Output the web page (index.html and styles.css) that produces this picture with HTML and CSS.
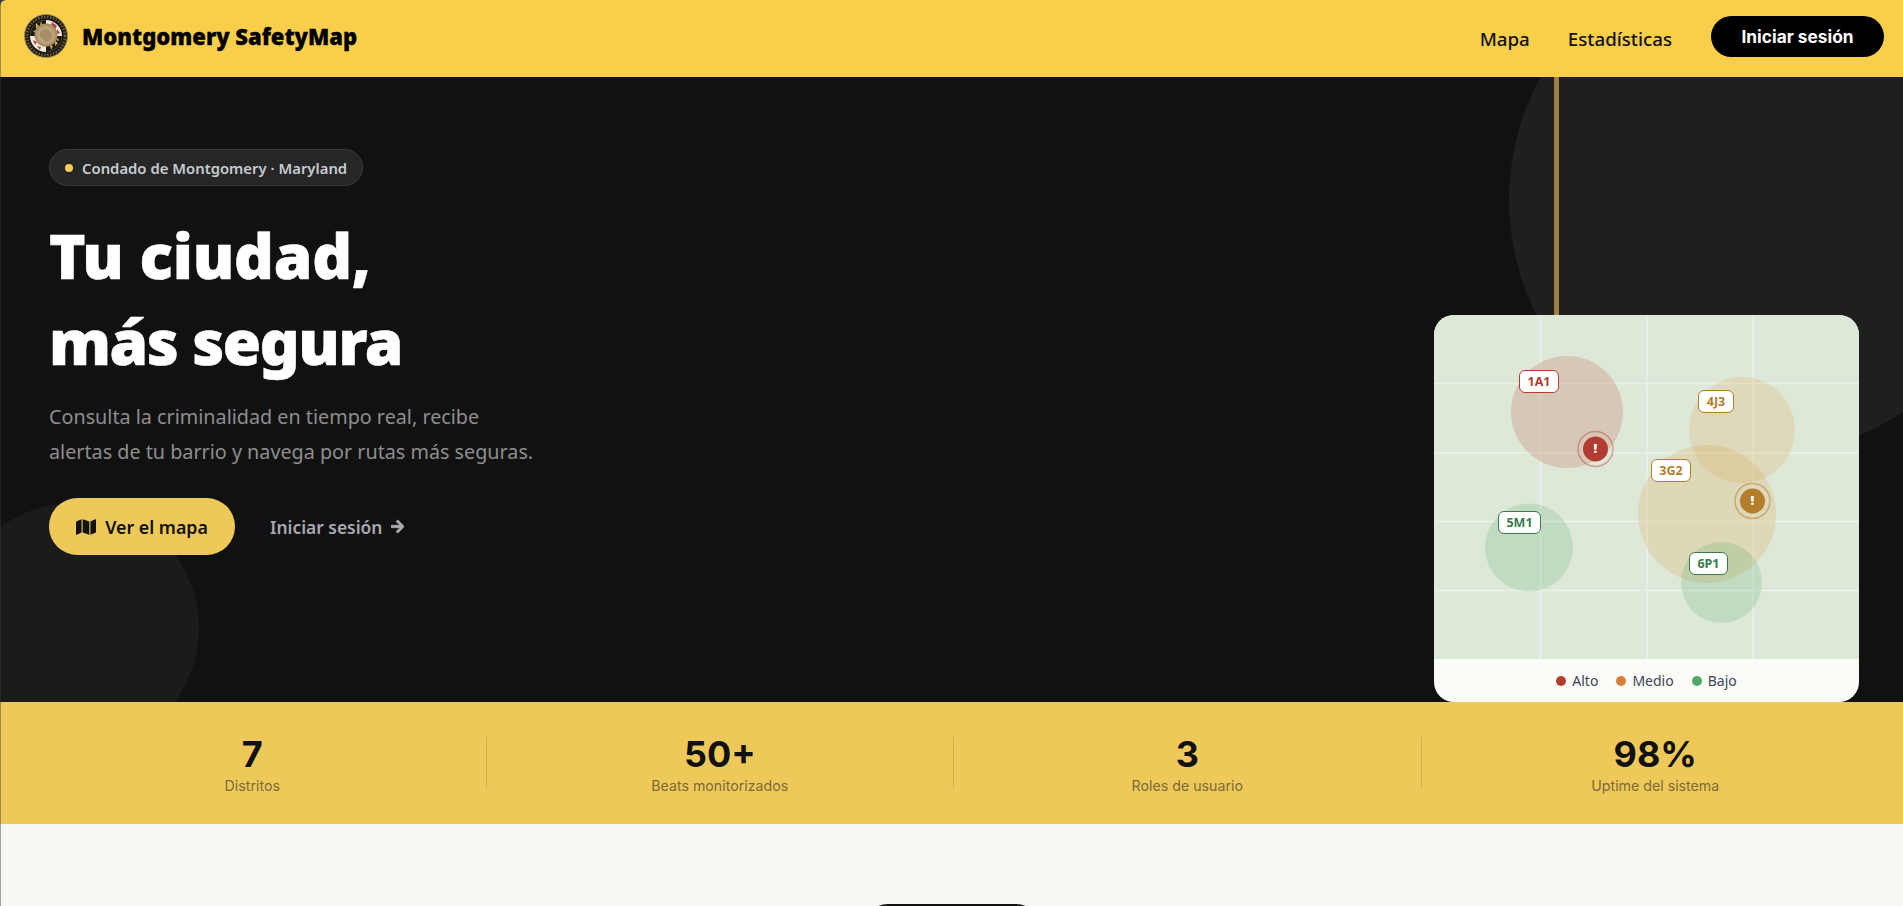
FILE: index.html
```html
<!DOCTYPE html>
<html lang="es">
<head>
    <meta charset="UTF-8">
    <title>Montgomery SafetyMap</title>
    <link rel="stylesheet" href="styles.css">
</head>
<body>
    <div class="page">
        <header class="topbar">
            <a href="#" class="brand">
                <svg class="brand_logo" viewBox="0 0 44 44" aria-hidden="true">
                    <defs>
                        <radialGradient id="seal_center">
                            <stop offset="0" stop-color="#cdb68a"/>
                            <stop offset="0.7" stop-color="#b9a077"/>
                            <stop offset="1" stop-color="#9a8662"/>
                        </radialGradient>
                    </defs>
                    <circle cx="22" cy="22" r="21.5" fill="#1a1710" stroke="#a08c58" stroke-width="1"/>
                    <circle cx="22" cy="22" r="19" fill="none" stroke="#6e6244" stroke-width="2.6" stroke-dasharray="1.5 1.5"/>
                    <circle cx="22" cy="22" r="16" fill="#efe9de"/>
                    <path d="M22 6a16 16 0 0 0-16 16h16z" fill="#1d1a12"/>
                    <path d="M22 38a16 16 0 0 0 16-16H22z" fill="#1d1a12"/>
                    <path d="M12 9l3 3-3 3zM9 17l4-1v4zM17 7l2 6-3-1z" fill="#d9b544"/>
                    <path d="M31 27l3 2-3 3zM26 31l3 1-2 4zM34 24l1 3-3-1z" fill="#d9b544"/>
                    <path d="M28 8l5 4-2 3-4-3zM33 15l3 4-3 1z" fill="#b8404a"/>
                    <path d="M9 26l4 2-2 3zM13 32l4 1-1 3z" fill="#b8404a"/>
                    <circle cx="22" cy="21" r="11.5" fill="url(#seal_center)"/>
                    <path d="M16 18l4-3 5 1 3 4-1 5-4 3-4-2-3-4z" fill="#a58e68"/>
                </svg>
                <span class="brand_name">Montgomery SafetyMap</span>
            </a>
            <nav class="topbar_nav">
                <a href="#" class="topbar_link">Mapa</a>
                <a href="#" class="topbar_link">Estadísticas</a>
                <a href="#" class="login_btn">Iniciar sesión</a>
            </nav>
        </header>

        <section class="hero">
            <div class="hero_circle_big"></div>
            <div class="hero_circle_small"></div>
            <div class="hero_line"></div>

            <div class="hero_text">
                <div class="chip"><span class="chip_dot"></span>Condado de Montgomery · Maryland</div>
                <h1 class="hero_title"><span class="title_first">Tu ciudad,</span><br>más segura</h1>
                <p class="hero_desc">Consulta la criminalidad en tiempo real, recibe<br>alertas de tu barrio y navega por rutas más seguras.</p>
                <div class="hero_actions">
                    <a href="#" class="map_btn">
                        <svg class="map_icon" viewBox="0 0 576 512" aria-hidden="true"><path d="M0 117.66v346.32c0 11.32 11.43 19.06 21.94 14.86L160 416V32L20.12 87.95A32.006 32.006 0 0 0 0 117.66zM192 416l192 64V96L192 32v384zM554.06 33.16L416 96v384l139.88-55.95A31.996 31.996 0 0 0 576 394.34V48.02c0-11.32-11.43-19.06-21.94-14.86z"/></svg>
                        Ver el mapa
                    </a>
                    <a href="#" class="ghost_link">
                        Iniciar sesión
                        <svg class="arrow_icon" viewBox="0 0 448 512" aria-hidden="true"><path d="M190.5 66.9l22.2-22.2c9.4-9.4 24.6-9.4 33.9 0L441 239c9.4 9.4 9.4 24.6 0 33.9L246.6 467.3c-9.4 9.4-24.6 9.4-33.9 0l-22.2-22.2c-9.5-9.5-9.3-25 .4-34.3L311.4 296H24c-13.3 0-24-10.7-24-24v-32c0-13.3 10.7-24 24-24h287.4L190.9 101.2c-9.8-9.3-10-24.8-.4-34.3z"/></svg>
                    </a>
                </div>
            </div>

            <div class="map_card">
                <div class="map_area">
                    <svg class="map_svg" viewBox="0 0 425 344" aria-hidden="true">
                        <g class="map_grid">
                            <line x1="106.5" y1="0" x2="106.5" y2="344"/>
                            <line x1="213" y1="0" x2="213" y2="344"/>
                            <line x1="319" y1="0" x2="319" y2="344"/>
                            <line x1="0" y1="68.5" x2="425" y2="68.5"/>
                            <line x1="0" y1="138" x2="425" y2="138"/>
                            <line x1="0" y1="206.5" x2="425" y2="206.5"/>
                            <line x1="0" y1="275.5" x2="425" y2="275.5"/>
                        </g>
                        <circle cx="133" cy="97" r="56" fill="#c0513c" fill-opacity="0.22"/>
                        <circle cx="308" cy="115" r="53" fill="#e0a040" fill-opacity="0.2"/>
                        <circle cx="273" cy="199" r="69" fill="#e0a040" fill-opacity="0.22"/>
                        <circle cx="95" cy="232.5" r="44" fill="#52a86a" fill-opacity="0.2"/>
                        <circle cx="287.5" cy="267.5" r="40.5" fill="#52a86a" fill-opacity="0.2"/>

                        <circle cx="161.5" cy="134" r="17.5" fill="none" stroke="#b23c32" stroke-opacity="0.4" stroke-width="1.5"/>
                        <circle cx="161.5" cy="134" r="12.5" fill="#b23c32"/>
                        <circle cx="318.5" cy="186" r="17.5" fill="none" stroke="#b37d2b" stroke-opacity="0.5" stroke-width="1.5"/>
                        <circle cx="318.5" cy="186" r="12.5" fill="#b37d2b"/>
                    </svg>
                    <span class="pin_mark pin_red">!</span>
                    <span class="pin_mark pin_tan">!</span>
                    <span class="beat beat_high beat_1a1">1A1</span>
                    <span class="beat beat_mid beat_4j3">4J3</span>
                    <span class="beat beat_mid beat_3g2">3G2</span>
                    <span class="beat beat_low beat_5m1">5M1</span>
                    <span class="beat beat_low beat_6p1">6P1</span>
                </div>
                <div class="map_legend">
                    <span class="legend_item"><i class="legend_dot dot_high"></i>Alto</span>
                    <span class="legend_item"><i class="legend_dot dot_mid"></i>Medio</span>
                    <span class="legend_item"><i class="legend_dot dot_low"></i>Bajo</span>
                </div>
            </div>
        </section>

        <section class="stats">
            <div class="stat">
                <div class="stat_num">7</div>
                <div class="stat_label">Distritos</div>
            </div>
            <div class="stat">
                <div class="stat_num">50+</div>
                <div class="stat_label">Beats monitorizados</div>
            </div>
            <div class="stat">
                <div class="stat_num">3</div>
                <div class="stat_label">Roles de usuario</div>
            </div>
            <div class="stat">
                <div class="stat_num">98%</div>
                <div class="stat_label">Uptime del sistema</div>
            </div>
        </section>

        <section class="next_section">
            <div class="next_pill"></div>
        </section>
    </div>
</body>
</html>
```

FILE: styles.css
```css
* {
    box-sizing: border-box;
}
body {
    margin: 0;
    padding: 0;
    font-family: "Noto Sans", "Open Sans", sans-serif;
    background-color: #f7f6f1;
}
a {
    text-decoration: none;
    color: inherit;
}
.page {
    position: relative;
    height: 100vh;
    overflow: hidden;
}
/* window edge that shows in the corner */
.page::before {
    content: "";
    position: absolute;
    z-index: 10;
    left: 0;
    top: 0;
    width: 5px;
    height: 5px;
    background: radial-gradient(circle at 100% 100%, transparent 4px, #3a3a3a 5px);
}
.page::after {
    content: "";
    position: absolute;
    z-index: 10;
    left: 0;
    top: 0;
    bottom: 0;
    width: 1px;
    background-color: rgba(60, 60, 60, 0.45);
}

/* top bar */
.topbar {
    height: 77px;
    padding: 0 19px 0 24px;
    background-color: #f9ce4a;
    display: flex;
    align-items: center;
}
.brand {
    display: flex;
    align-items: center;
    gap: 14px;
    margin-top: -5px;
}
.brand_logo {
    width: 44px;
    height: 44px;
}
.brand_name {
    font-size: 22px;
    font-weight: 900;
    color: #000;
    -webkit-text-stroke: 0.3px #000;
}
.topbar_nav {
    margin-left: auto;
    display: flex;
    align-items: center;
}
.topbar_link {
    font-size: 18.7px;
    font-weight: 500;
    color: #111;
    margin-right: 38px;
}
.login_btn {
    width: 173px;
    height: 41px;
    margin-left: 1px;
    margin-top: -4px;
    border-radius: 21px;
    background-color: #000;
    color: #fff;
    font-family: Inter, sans-serif;
    font-size: 17.3px;
    font-weight: 700;
    display: flex;
    align-items: center;
    justify-content: center;
}

/* hero */
.hero {
    position: relative;
    height: 625px;
    padding: 72px 44px 0 49px;
    background-color: #111;
    overflow: hidden;
    display: flex;
    justify-content: space-between;
}
.hero_circle_big {
    position: absolute;
    left: 1509px;
    top: -131px;
    width: 508px;
    height: 508px;
    border-radius: 50%;
    background-color: #1f1f1f;
}
.hero_circle_small {
    position: absolute;
    left: -51px;
    top: 426px;
    width: 250px;
    height: 250px;
    border-radius: 50%;
    background-color: #1b1b1b;
}
.hero_line {
    position: absolute;
    left: 1554px;
    top: 0;
    width: 5px;
    height: 240px;
    background-color: #9a8340;
}
.hero_text {
    position: relative;
}
.chip {
    display: inline-flex;
    align-items: center;
    gap: 9px;
    height: 37px;
    padding: 0 15px;
    border: 1px solid #3a3a3a;
    border-radius: 19px;
    background-color: #262626;
    color: #c6cbd2;
    font-size: 14.85px;
    font-weight: 600;
}
.chip_dot {
    width: 8px;
    height: 8px;
    border-radius: 50%;
    background-color: #f5cf55;
}
.hero_title {
    margin: 26px 0 0;
    font-size: 62px;
    font-weight: 900;
    line-height: 86px;
    letter-spacing: -1.4px;
    color: #fff;
    -webkit-text-stroke: 0.6px #fff;
}
.title_first {
    letter-spacing: -0.2px;
}
.hero_desc {
    margin: 15px 0 0;
    font-size: 19.75px;
    line-height: 35px;
    color: #8e8e8e;
}
.hero_actions {
    margin-top: 29px;
    display: flex;
    align-items: center;
    gap: 35px;
}
.map_btn {
    width: 186px;
    height: 57px;
    border-radius: 29px;
    background-color: #eec95a;
    color: #111;
    font-size: 17.8px;
    font-weight: 600;
    display: flex;
    align-items: center;
    justify-content: center;
    gap: 9px;
}
.map_icon {
    width: 20px;
    height: 18px;
    fill: #111;
}
.ghost_link {
    color: #a9a9b0;
    font-size: 17.4px;
    font-weight: 600;
    display: flex;
    align-items: center;
    gap: 9px;
}
.arrow_icon {
    width: 13px;
    height: 15px;
    fill: #a9a9b0;
    stroke: #a9a9b0;
    stroke-width: 30;
}

/* map card */
.map_card {
    position: relative;
    align-self: flex-end;
    width: 425px;
    height: 387px;
    border-radius: 20px;
    overflow: hidden;
    background-color: #fbfbf8;
}
.map_area {
    position: relative;
    height: 344px;
    background-color: #dde8d9;
}
.map_svg {
    display: block;
    width: 425px;
    height: 344px;
}
.map_grid line {
    stroke: #ecf2e9;
    stroke-width: 1.4;
}
.pin_mark {
    position: absolute;
    width: 25px;
    height: 25px;
    color: #fff;
    font-size: 13px;
    font-weight: 900;
    line-height: 25px;
    text-align: center;
}
.pin_red {
    left: 149px;
    top: 121px;
}
.pin_tan {
    left: 306px;
    top: 173px;
}
.beat {
    position: absolute;
    height: 23px;
    border: 1px solid;
    border-radius: 6px;
    background-color: #fff;
    font-size: 12.5px;
    font-weight: 700;
    line-height: 21px;
    text-align: center;
}
.beat_high {
    color: #b23c32;
    border-color: #b23c32;
}
.beat_mid {
    color: #b37d2b;
    border-color: #b37d2b;
}
.beat_low {
    color: #3a7a4e;
    border-color: #3a7a4e;
}
.beat_1a1 {
    left: 85px;
    top: 55px;
    width: 40px;
}
.beat_4j3 {
    left: 264px;
    top: 75px;
    width: 36px;
}
.beat_3g2 {
    left: 217px;
    top: 144px;
    width: 40px;
}
.beat_5m1 {
    left: 64px;
    top: 196px;
    width: 43px;
}
.beat_6p1 {
    left: 255px;
    top: 237px;
    width: 39px;
}
.map_legend {
    height: 43px;
    display: flex;
    align-items: center;
    justify-content: center;
    gap: 18px;
    color: #3d4555;
    font-size: 14px;
}
.legend_item {
    display: flex;
    align-items: center;
    gap: 6px;
}
.legend_dot {
    width: 10px;
    height: 10px;
    border-radius: 50%;
}
.dot_high {
    background-color: #b13d32;
}
.dot_mid {
    background-color: #d97f3a;
}
.dot_low {
    background-color: #52a86a;
}

/* stats band */
.stats {
    height: 122px;
    padding: 0 14px 0 19px;
    background-color: #eec95a;
    display: grid;
    grid-template-columns: repeat(4, 1fr);
    align-items: center;
    font-family: Inter, sans-serif;
}
.stat {
    height: 52px;
    border-right: 1px solid #d4b04c;
    text-align: center;
}
.stat:last-child {
    border-right: none;
}
.stat_num {
    font-size: 36px;
    font-weight: 700;
    line-height: 34px;
    color: #111;
}
.stat_label {
    margin-top: 7px;
    font-size: 14.2px;
    line-height: 16px;
    color: #7a6a35;
}

/* section below, only its first pixels show */
.next_section {
    padding-top: 80px;
    display: flex;
    justify-content: center;
}
.next_pill {
    width: 178px;
    height: 50px;
    border-radius: 25px 25px 0 0;
    background-color: #111;
}
```
